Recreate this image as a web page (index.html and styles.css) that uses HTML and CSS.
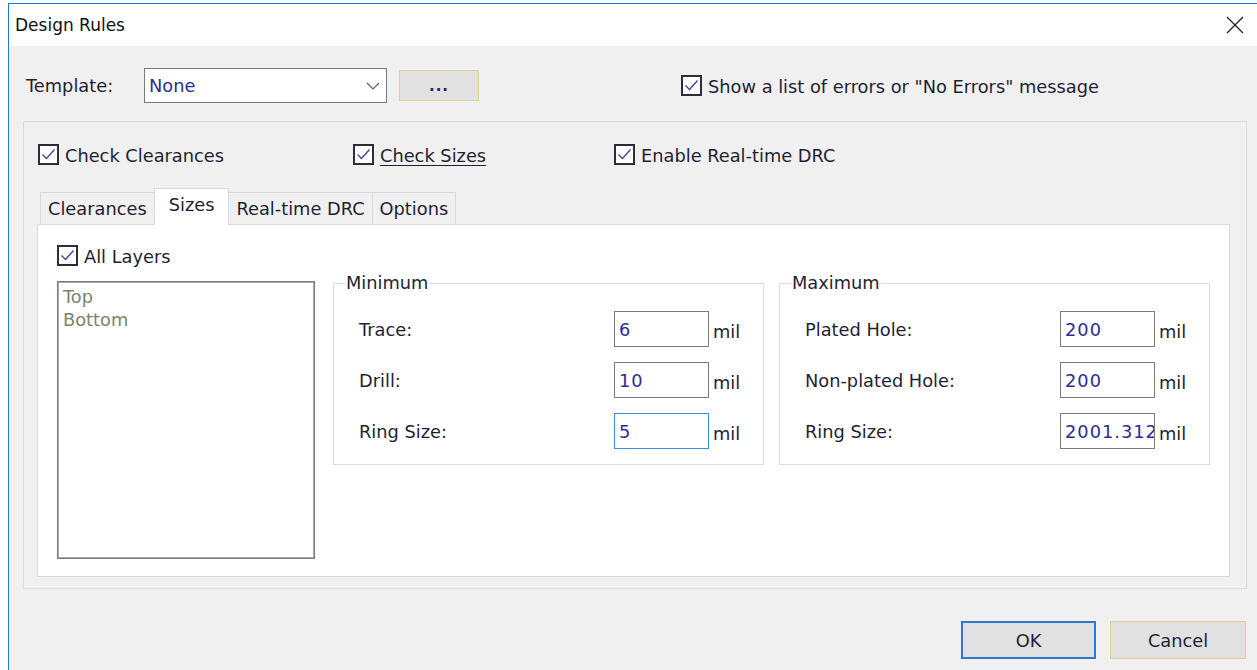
FILE: index.html
```html
<!DOCTYPE html>
<html lang="en">
<head>
<meta charset="utf-8">
<title>Design Rules</title>
<link rel="stylesheet" href="styles.css">
</head>
<body>
<div class="window">
  <header class="titlebar">
    <span class="title">Design Rules</span>
    <svg class="close" width="18" height="18" viewBox="0 0 18 18" aria-label="Close"><path d="M1 1 L17 17 M17 1 L1 17"/></svg>
  </header>

  <main class="dialog-body">
    <div class="template-row">
      <span class="template-label">Template:</span>
      <div class="combo">
        <span class="combo-value">None</span>
        <svg class="chevron" width="14" height="8" viewBox="0 0 14 8"><polyline points="1,1 7,7 13,1"/></svg>
      </div>
      <button class="btn btn-more" type="button">...</button>
      <label class="check show-list">
        <span class="box"><svg viewBox="0 0 17 17"><polyline points="2.5,8.5 6.5,12.5 14.5,3.5"/></svg></span>
        <span>Show a list of errors or &quot;No Errors&quot; message</span>
      </label>
    </div>

    <section class="panel">
      <div class="check-row">
        <label class="check cb-clear">
          <span class="box"><svg viewBox="0 0 17 17"><polyline points="2.5,8.5 6.5,12.5 14.5,3.5"/></svg></span>
          <span>Check Clearances</span>
        </label>
        <label class="check cb-sizes">
          <span class="box"><svg viewBox="0 0 17 17"><polyline points="2.5,8.5 6.5,12.5 14.5,3.5"/></svg></span>
          <span class="underlined">Check Sizes</span>
        </label>
        <label class="check">
          <span class="box"><svg viewBox="0 0 17 17"><polyline points="2.5,8.5 6.5,12.5 14.5,3.5"/></svg></span>
          <span>Enable Real-time DRC</span>
        </label>
      </div>

      <nav class="tabs">
        <span class="tab">Clearances</span>
        <span class="tab tab-active">Sizes</span>
        <span class="tab">Real-time DRC</span>
        <span class="tab">Options</span>
      </nav>

      <div class="page">
        <label class="check">
          <span class="box"><svg viewBox="0 0 17 17"><polyline points="2.5,8.5 6.5,12.5 14.5,3.5"/></svg></span>
          <span>All Layers</span>
        </label>

        <div class="sizes-row">
          <ul class="layer-list">
            <li>Top</li>
            <li>Bottom</li>
          </ul>

          <fieldset class="group group-min">
            <legend>Minimum</legend>
            <div class="fields">
              <span>Trace:</span><input class="num" type="text" value="6"><span class="unit">mil</span>
              <span>Drill:</span><input class="num" type="text" value="10"><span class="unit">mil</span>
              <span>Ring Size:</span><input class="num focused" type="text" value="5"><span class="unit">mil</span>
            </div>
          </fieldset>

          <fieldset class="group group-max">
            <legend>Maximum</legend>
            <div class="fields">
              <span>Plated Hole:</span><input class="num" type="text" value="200"><span class="unit">mil</span>
              <span>Non-plated Hole:</span><input class="num" type="text" value="200"><span class="unit">mil</span>
              <span>Ring Size:</span><input class="num" type="text" value="2001.312"><span class="unit">mil</span>
            </div>
          </fieldset>
        </div>
      </div>
    </section>

    <div class="actions">
      <button class="btn btn-ok" type="button">OK</button>
      <button class="btn btn-cancel" type="button">Cancel</button>
    </div>
  </main>
</div>
</body>
</html>
```
FILE: styles.css
```css
* {
  box-sizing: border-box;
}

html {
  background: #ffffff;
}

body {
  margin: 3px 0 0 8px;
  height: 667px;
  overflow: hidden;
  font-family: "DejaVu Sans", "Liberation Sans", sans-serif;
  font-size: 17.8px;
  color: #1f1f33;
}

/* dialog frame */
.window {
  width: 1249px;
  height: 667px;
  display: flex;
  flex-direction: column;
  border-left: 1px solid #1c7cd5;
  border-top: 1px solid #1c7cd5;
  background: #f0f0f0;
}

.titlebar {
  flex: none;
  height: 42px;
  display: flex;
  align-items: center;
  justify-content: space-between;
  padding: 0 13px 0 6px;
  background: #ffffff;
}

.title {
  font-size: 17px;
  color: #111111;
}

.close path {
  stroke: #222222;
  stroke-width: 1.3;
  fill: none;
}

.dialog-body {
  flex: 1;
  padding: 22px 10px 0 14px;
}

/* template selector row */
.template-row {
  display: flex;
  align-items: center;
  height: 35px;
}

.template-label {
  width: 118px;
  margin-left: 3px;
}

.combo {
  width: 243px;
  height: 35px;
  display: flex;
  align-items: center;
  justify-content: space-between;
  padding: 0 6px 0 4px;
  border: 1px solid #7a7a7a;
  background: #ffffff;
  color: #2d2d96;
}

.chevron polyline {
  stroke: #606060;
  stroke-width: 1.2;
  fill: none;
}

.btn {
  font-family: inherit;
  font-size: 17.8px;
  color: #1f1f33;
  background: #e1e1e1;
  padding: 0;
}

.btn-more {
  width: 80px;
  height: 31px;
  margin-left: 12px;
  border: 1px solid #e6d08f;
  font-size: 15px;
  font-weight: bold;
  color: #2c2450;
  letter-spacing: 1px;
}

.show-list {
  margin-left: 202px;
}

/* checkboxes */
.check {
  display: flex;
  align-items: center;
  gap: 6px;
  height: 21px;
}

.check > span:last-child {
  padding-top: 2px;
}

.box {
  flex: none;
  width: 21px;
  height: 21px;
  border: 2px solid #302b38;
  background: #ffffff;
  display: flex;
}

.box svg {
  width: 17px;
  height: 17px;
}

.box polyline {
  stroke: #43439a;
  stroke-width: 1.4;
  fill: none;
}

.underlined {
  text-decoration: underline;
  text-underline-offset: 3px;
}

/* outer group panel */
.panel {
  margin-top: 18px;
  border: 1px solid #dadada;
  padding: 22px 16px 11px 13px;
}

.check-row {
  display: flex;
  padding-left: 1px;
}

.cb-clear {
  width: 315px;
}

.cb-sizes {
  width: 261px;
}

/* tab strip */
.tabs {
  position: relative;
  z-index: 1;
  display: flex;
  align-items: flex-end;
  height: 37px;
  margin: 23px 0 -1px 3px;
}

.tab {
  height: 32px;
  margin-bottom: 1px;
  margin-right: -1px;
  display: flex;
  align-items: center;
  padding: 0 7px;
  border: 1px solid #d9d9d9;
  border-bottom: none;
  background: #f0f0f0;
}

.tab-active {
  height: 37px;
  margin-bottom: 0;
  padding: 0 14px 5px;
  background: #ffffff;
}

.page {
  height: 353px;
  padding: 20px 19px 0;
  border: 1px solid #d9d9d9;
  background: #ffffff;
}

.sizes-row {
  display: flex;
  align-items: flex-start;
  margin-top: 7px;
}

.layer-list {
  list-style: none;
  margin: 8px 18px 0 0;
  padding: 3px 5px;
  width: 258px;
  height: 278px;
  border: 1px solid #7c7c80;
  box-shadow: inset 0 0 0 1px #a6a6aa;
  line-height: 23px;
  color: #7f8268;
}

/* minimum / maximum groups */
.group {
  width: 431px;
  margin: 0;
  min-width: 0;
  padding: 0 0 15px 11px;
  border: 1px solid #dcdcdc;
}

.group-max {
  margin-left: 15px;
}

.group legend {
  padding: 0 1px;
  line-height: 20px;
}

.fields {
  display: grid;
  grid-template-columns: 251px 95px auto;
  column-gap: 4px;
  row-gap: 15px;
  align-items: center;
  margin: 18px 0 0 14px;
}

.num {
  width: 95px;
  height: 36px;
  padding: 0 0 0 4px;
  border: 1px solid #7a7a7a;
  background: #ffffff;
  font-family: inherit;
  font-size: 17.8px;
  letter-spacing: 1px;
  color: #2d2d96;
  outline: none;
}

.num.focused {
  border-color: #3d8fe0;
}

.unit {
  padding-top: 4px;
}

/* dialog buttons */
.actions {
  display: flex;
  justify-content: flex-end;
  gap: 14px;
  margin-top: 32px;
  padding-right: 1px;
}

.btn-ok {
  width: 135px;
  height: 38px;
  border: 2px solid #2a7ad2;
}

.btn-cancel {
  width: 136px;
  height: 38px;
  border: 1px solid #e5cf8f;
}
```
